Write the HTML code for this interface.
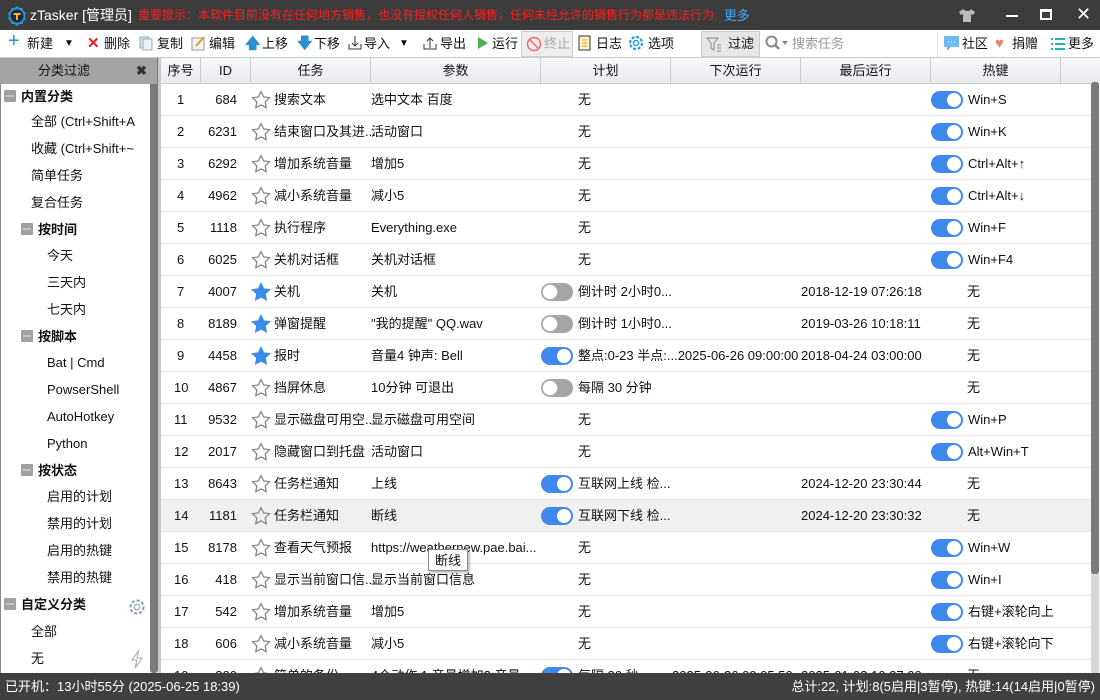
<!DOCTYPE html>
<html><head><meta charset="utf-8"><style>
*{margin:0;padding:0;box-sizing:border-box}
body{width:1100px;height:700px;overflow:hidden;position:relative;background:#fff;font-family:"Liberation Sans","Noto Sans CJK SC",sans-serif;font-size:13px;color:#111}
.a{position:absolute;white-space:nowrap}
#title{left:0;top:0;width:1100px;height:30px;background:#3c3c3c}
#tb{left:0;top:30px;width:1100px;height:28px;background:#fff;border-bottom:1px solid #ccc}
.tbi{position:absolute;top:36px;font-size:13px;line-height:16px}
#sbh{left:0;top:58px;width:158px;height:26px;background:#a4a4a4;border-right:1px solid #777}
#side{left:0;top:84px;width:150px;height:589px;background:#fff;border-left:1px solid #888}
#ssb{left:150px;top:84px;width:8px;height:589px;background:#7a7a7a;border-radius:0 0 3px 3px}
#sdiv{left:158px;top:58px;width:3px;height:615px;background:#c8c8c8}
#th{left:161px;top:58px;width:939px;height:26px;background:linear-gradient(#f7f8fa,#e8eaee);border-bottom:1px solid #c9ced6}
.hc{position:absolute;top:58px;height:26px;line-height:26px;text-align:center;border-right:1px solid #c9ced6;font-size:13px}
.row{position:absolute;left:161px;width:930px;height:32px;border-bottom:1px solid #e6e6e6}
.c{position:absolute;top:0;line-height:31px;white-space:nowrap}
.tg{position:absolute;top:7px;width:32px;height:18px;border-radius:9px;background:#3f88ee}
.tg:after{content:"";position:absolute;right:2px;top:2px;width:14px;height:14px;border-radius:50%;background:#fff}
.tg.off{background:#a5a5a5}
.tg.off:after{left:1px;right:auto;top:1px;width:16px;height:16px;border:1px solid #bbb;box-sizing:border-box}
.st{position:absolute;top:6px;left:90px}
.sd{position:absolute;font-size:13px;line-height:16px}
.box{display:inline-block;width:12px;height:12px;background:#a0a0a0;vertical-align:-1px;margin-right:5px;position:relative;border-radius:1px}
.box:after{content:"";position:absolute;left:2px;right:2px;top:5px;height:2px;background:#c4c4c4}
#status{left:0;top:673px;width:1100px;height:27px;background:#404040;color:#fff;font-size:13px;line-height:27px}
</style></head><body>
<div class="a" id="title"></div>
<svg class="a" style="left:6px;top:5px" width="22" height="22" viewBox="0 0 22 22"><path d="M11 1l2.5 2h3l1 3 2.5 2-1 3 1 3-2.5 2-1 3h-3L11 21l-2.5-2h-3l-1-3L2 14l1-3-1-3 2.5-2 1-3h3z" fill="#2a8fd6"/><circle cx="11" cy="11" r="6.5" fill="#1f2a36"/><path d="M7.5 8h7v2h-2.5v5h-2v-5H7.5z" fill="#f4b63a"/></svg>
<div class="a" style="left:30px;top:6px;color:#fff;font-size:14px;line-height:18px">zTasker [管理员]</div>
<div class="a" style="left:138px;top:7px;color:#ff1e1e;font-size:12px;line-height:17px">重要提示：本软件目前没有在任何地方销售，也没有授权任何人销售，任何未经允许的销售行为都是违法行为</div>
<div class="a" style="left:724px;top:7px;color:#3ea8ff;font-size:13px;line-height:17px">更多</div>
<svg class="a" style="left:958px;top:8px" width="18" height="15" viewBox="0 0 18 15"><path d="M5 1L1 4l2 3 2-1v8h8V6l2 1 2-3-4-3c-1 1.5-2 2-3 2S6 2.5 5 1z" fill="#bbb"/></svg>
<div class="a" style="left:1006px;top:15px;width:12px;height:2px;background:#fff"></div>
<div class="a" style="left:1040px;top:9px;width:12px;height:11px;border:2px solid #fff;border-top-width:3px"></div>
<div class="a" style="left:1076px;top:3px;color:#fff;font-size:18px;line-height:22px">✕</div>

<div class="a" id="tb"></div>
<div class="tbi" style="left:8px;color:#2a8fd6;font-size:20px;top:33px">+</div><div class="tbi" style="left:27px">新建</div><div class="tbi" style="left:64px;font-size:10px">▼</div>
<div class="tbi" style="left:87px;color:#e02020;font-size:15px;font-weight:bold">✕</div><div class="tbi" style="left:104px">删除</div>
<svg class="a" style="left:139px;top:36px" width="14" height="15"><rect x="1" y="1" width="9" height="11" fill="#dde5ee" stroke="#9ab"/><rect x="4" y="3" width="9" height="11" fill="#eef2f6" stroke="#9ab"/></svg><div class="tbi" style="left:157px">复制</div>
<svg class="a" style="left:191px;top:35px" width="16" height="16"><rect x="1" y="3" width="12" height="12" fill="#f4f4f4" stroke="#999"/><path d="M5 11L13 2" stroke="#d9a020" stroke-width="2"/></svg><div class="tbi" style="left:209px">编辑</div>
<div class="tbi" style="left:245px;color:#2a8fd6;font-size:15px;font-weight:bold">🡅</div><div class="tbi" style="left:262px">上移</div>
<div class="tbi" style="left:297px;color:#2a8fd6;font-size:15px;font-weight:bold">🡇</div><div class="tbi" style="left:314px">下移</div>
<svg class="a" style="left:348px;top:35px" width="14" height="16"><path d="M7 1v10M4 8l3 3 3-3M1 9v5h12V9" fill="none" stroke="#333"/></svg><div class="tbi" style="left:364px">导入</div><div class="tbi" style="left:399px;font-size:10px">▼</div>
<svg class="a" style="left:423px;top:35px" width="14" height="16"><path d="M7 13V3M4 6l3-3 3 3M1 9v5h12V9" fill="none" stroke="#333"/></svg><div class="tbi" style="left:440px">导出</div>
<svg class="a" style="left:477px;top:36px" width="12" height="14"><path d="M1 1l10 6-10 6z" fill="#4caf50"/></svg><div class="tbi" style="left:492px">运行</div>
<div class="a" style="left:521px;top:31px;width:52px;height:26px;background:#eee;border:1px solid #ccc"></div>
<svg class="a" style="left:526px;top:36px" width="16" height="16"><circle cx="8" cy="8" r="6.5" fill="none" stroke="#e66" stroke-width="1.5"/><path d="M3.5 3.5l9 9" stroke="#e66" stroke-width="1.5"/></svg><div class="tbi" style="left:544px;color:#aaa">终止</div>
<svg class="a" style="left:578px;top:35px" width="13" height="16"><rect x="1" y="1" width="11" height="14" fill="#fff6d0" stroke="#333"/><path d="M4 5h5M4 8h5M4 11h5" stroke="#e0a000"/></svg><div class="tbi" style="left:596px">日志</div>
<svg class="a" style="left:628px;top:35px" width="16" height="16"><circle cx="8" cy="8" r="6" fill="none" stroke="#2a9be0" stroke-width="2.2" stroke-dasharray="3 1.7"/><circle cx="8" cy="8" r="2.5" fill="none" stroke="#2a9be0" stroke-width="1.5"/></svg><div class="tbi" style="left:648px">选项</div>
<div class="a" style="left:701px;top:31px;width:59px;height:26px;background:#e6e6e6;border:1px solid #ccc"></div>
<svg class="a" style="left:706px;top:36px" width="16" height="16"><path d="M1 2h11l-4 5v7l-3-2V7z" fill="none" stroke="#888"/><path d="M11 9h4M11 12h4M11 15h4" stroke="#888"/></svg><div class="tbi" style="left:728px">过滤</div>
<svg class="a" style="left:765px;top:35px" width="24" height="16"><circle cx="6.5" cy="6.5" r="5" fill="none" stroke="#888" stroke-width="2"/><path d="M10 10l4 4" stroke="#888" stroke-width="2.5"/><path d="M17 6h6l-3 4z" fill="#888"/></svg><div class="tbi" style="left:792px;color:#999">搜索任务</div>
<div class="a" style="left:937px;top:31px;width:1px;height:26px;background:#ddd"></div>
<svg class="a" style="left:943px;top:35px" width="17" height="17"><path d="M1 1h15v11H8l-4 4v-4H1z" fill="#6fb9ee"/><path d="M5 7h1M8 7h1M11 7h1" stroke="#fff"/></svg><div class="tbi" style="left:962px">社区</div>
<div class="tbi" style="left:995px;color:#f08070;font-size:15px">♥</div><div class="tbi" style="left:1012px">捐赠</div>
<svg class="a" style="left:1050px;top:37px" width="15" height="14"><path d="M1 2h2M5 2h10M1 7h2M5 7h10M1 12h2M5 12h10" stroke="#1fb5b5" stroke-width="2"/></svg><div class="tbi" style="left:1068px">更多</div>

<div class="a" id="sbh"></div>
<div class="a" style="left:0;top:58px;width:128px;text-align:center;line-height:26px">分类过滤</div>
<div class="a" style="left:136px;top:58px;line-height:26px;font-weight:bold;color:#333">✖</div>
<div class="a" id="side"></div>
<div class="a" id="ssb"></div>
<div class="a" id="sdiv"></div>
<div class="sd" style="left:4px;top:89px;font-weight:bold"><span class="box"></span>内置分类</div>
<div class="sd" style="left:31px;top:114px">全部 (Ctrl+Shift+A</div>
<div class="sd" style="left:31px;top:141px">收藏 (Ctrl+Shift+~</div>
<div class="sd" style="left:31px;top:168px">简单任务</div>
<div class="sd" style="left:31px;top:195px">复合任务</div>
<div class="sd" style="left:21px;top:222px;font-weight:bold"><span class="box"></span>按时间</div>
<div class="sd" style="left:47px;top:248px">今天</div>
<div class="sd" style="left:47px;top:275px">三天内</div>
<div class="sd" style="left:47px;top:302px">七天内</div>
<div class="sd" style="left:21px;top:329px;font-weight:bold"><span class="box"></span>按脚本</div>
<div class="sd" style="left:47px;top:355px">Bat | Cmd</div>
<div class="sd" style="left:47px;top:382px">PowserShell</div>
<div class="sd" style="left:47px;top:409px">AutoHotkey</div>
<div class="sd" style="left:47px;top:436px">Python</div>
<div class="sd" style="left:21px;top:463px;font-weight:bold"><span class="box"></span>按状态</div>
<div class="sd" style="left:47px;top:489px">启用的计划</div>
<div class="sd" style="left:47px;top:516px">禁用的计划</div>
<div class="sd" style="left:47px;top:543px">启用的热键</div>
<div class="sd" style="left:47px;top:570px">禁用的热键</div>
<div class="sd" style="left:4px;top:597px;font-weight:bold"><span class="box"></span>自定义分类</div>
<svg class="a" style="left:128px;top:598px" width="18" height="18"><circle cx="9" cy="9" r="6.5" fill="none" stroke="#8898b0" stroke-width="2" stroke-dasharray="3 2"/><circle cx="9" cy="9" r="2.8" fill="none" stroke="#8898b0"/></svg>
<div class="sd" style="left:31px;top:624px">全部</div>
<div class="sd" style="left:31px;top:651px">无</div>
<svg class="a" style="left:130px;top:649px" width="14" height="20"><path d="M9 1L2 11h5l-2 8 7-10H7z" fill="none" stroke="#aaa"/></svg>

<div class="a" id="th"></div>
<div class="hc" style="left:161px;width:40px">序号</div>
<div class="hc" style="left:201px;width:50px">ID</div>
<div class="hc" style="left:251px;width:120px">任务</div>
<div class="hc" style="left:371px;width:170px">参数</div>
<div class="hc" style="left:541px;width:130px">计划</div>
<div class="hc" style="left:671px;width:130px">下次运行</div>
<div class="hc" style="left:801px;width:130px">最后运行</div>
<div class="hc" style="left:931px;width:130px">热键</div>

<svg width="0" height="0" style="position:absolute"><defs><symbol id="s" viewBox="0 0 20 20"><path d="M10 1.5l2.6 5.4 5.9.8-4.3 4.1 1 5.9L10 14.9l-5.2 2.8 1-5.9L1.5 7.7l5.9-.8z" fill="none" stroke="#888" stroke-width="1.3"/></symbol><symbol id="f" viewBox="0 0 20 20"><path d="M10 1.5l2.6 5.4 5.9.8-4.3 4.1 1 5.9L10 14.9l-5.2 2.8 1-5.9L1.5 7.7l5.9-.8z" fill="#3a8ee6" stroke="#3a8ee6" stroke-width="1.3"/></symbol></defs></svg>

<div class="row" style="top:84px"><span class="c" style="left:16px">1</span><span class="c" style="right:854px">684</span><svg class="st" width="20" height="20"><use href="#s"/></svg><span class="c" style="left:113px">搜索文本</span><span class="c" style="left:210px">选中文本 百度</span><span class="c" style="left:417px">无</span><span class="tg" style="left:770px"></span><span class="c" style="left:807px">Win+S</span></div>
<div class="row" style="top:116px"><span class="c" style="left:16px">2</span><span class="c" style="right:854px">6231</span><svg class="st" width="20" height="20"><use href="#s"/></svg><span class="c" style="left:113px">结束窗口及其进...</span><span class="c" style="left:210px">活动窗口</span><span class="c" style="left:417px">无</span><span class="tg" style="left:770px"></span><span class="c" style="left:807px">Win+K</span></div>
<div class="row" style="top:148px"><span class="c" style="left:16px">3</span><span class="c" style="right:854px">6292</span><svg class="st" width="20" height="20"><use href="#s"/></svg><span class="c" style="left:113px">增加系统音量</span><span class="c" style="left:210px">增加5</span><span class="c" style="left:417px">无</span><span class="tg" style="left:770px"></span><span class="c" style="left:807px">Ctrl+Alt+↑</span></div>
<div class="row" style="top:180px"><span class="c" style="left:16px">4</span><span class="c" style="right:854px">4962</span><svg class="st" width="20" height="20"><use href="#s"/></svg><span class="c" style="left:113px">减小系统音量</span><span class="c" style="left:210px">减小5</span><span class="c" style="left:417px">无</span><span class="tg" style="left:770px"></span><span class="c" style="left:807px">Ctrl+Alt+↓</span></div>
<div class="row" style="top:212px"><span class="c" style="left:16px">5</span><span class="c" style="right:854px">1118</span><svg class="st" width="20" height="20"><use href="#s"/></svg><span class="c" style="left:113px">执行程序</span><span class="c" style="left:210px">Everything.exe</span><span class="c" style="left:417px">无</span><span class="tg" style="left:770px"></span><span class="c" style="left:807px">Win+F</span></div>
<div class="row" style="top:244px"><span class="c" style="left:16px">6</span><span class="c" style="right:854px">6025</span><svg class="st" width="20" height="20"><use href="#s"/></svg><span class="c" style="left:113px">关机对话框</span><span class="c" style="left:210px">关机对话框</span><span class="c" style="left:417px">无</span><span class="tg" style="left:770px"></span><span class="c" style="left:807px">Win+F4</span></div>
<div class="row" style="top:276px"><span class="c" style="left:16px">7</span><span class="c" style="right:854px">4007</span><svg class="st" width="20" height="20"><use href="#f"/></svg><span class="c" style="left:113px">关机</span><span class="c" style="left:210px">关机</span><span class="tg off" style="left:380px"></span><span class="c" style="left:417px">倒计时 2小时0...</span><span class="c" style="left:640px">2018-12-19 07:26:18</span><span class="c" style="left:806px">无</span></div>
<div class="row" style="top:308px"><span class="c" style="left:16px">8</span><span class="c" style="right:854px">8189</span><svg class="st" width="20" height="20"><use href="#f"/></svg><span class="c" style="left:113px">弹窗提醒</span><span class="c" style="left:210px">"我的提醒" QQ.wav</span><span class="tg off" style="left:380px"></span><span class="c" style="left:417px">倒计时 1小时0...</span><span class="c" style="left:640px">2019-03-26 10:18:11</span><span class="c" style="left:806px">无</span></div>
<div class="row" style="top:340px"><span class="c" style="left:16px">9</span><span class="c" style="right:854px">4458</span><svg class="st" width="20" height="20"><use href="#f"/></svg><span class="c" style="left:113px">报时</span><span class="c" style="left:210px">音量4 钟声: Bell</span><span class="tg" style="left:380px"></span><span class="c" style="left:417px">整点:0-23 半点:...2025-06-26 09:00:00</span><span class="c" style="left:640px">2018-04-24 03:00:00</span><span class="c" style="left:806px">无</span></div>
<div class="row" style="top:372px"><span class="c" style="left:13px">10</span><span class="c" style="right:854px">4867</span><svg class="st" width="20" height="20"><use href="#s"/></svg><span class="c" style="left:113px">挡屏休息</span><span class="c" style="left:210px">10分钟 可退出</span><span class="tg off" style="left:380px"></span><span class="c" style="left:417px">每隔 30 分钟</span><span class="c" style="left:806px">无</span></div>
<div class="row" style="top:404px"><span class="c" style="left:13px">11</span><span class="c" style="right:854px">9532</span><svg class="st" width="20" height="20"><use href="#s"/></svg><span class="c" style="left:113px">显示磁盘可用空...</span><span class="c" style="left:210px">显示磁盘可用空间</span><span class="c" style="left:417px">无</span><span class="tg" style="left:770px"></span><span class="c" style="left:807px">Win+P</span></div>
<div class="row" style="top:436px"><span class="c" style="left:13px">12</span><span class="c" style="right:854px">2017</span><svg class="st" width="20" height="20"><use href="#s"/></svg><span class="c" style="left:113px">隐藏窗口到托盘</span><span class="c" style="left:210px">活动窗口</span><span class="c" style="left:417px">无</span><span class="tg" style="left:770px"></span><span class="c" style="left:807px">Alt+Win+T</span></div>
<div class="row" style="top:468px"><span class="c" style="left:13px">13</span><span class="c" style="right:854px">8643</span><svg class="st" width="20" height="20"><use href="#s"/></svg><span class="c" style="left:113px">任务栏通知</span><span class="c" style="left:210px">上线</span><span class="tg" style="left:380px"></span><span class="c" style="left:417px">互联网上线 检...</span><span class="c" style="left:640px">2024-12-20 23:30:44</span><span class="c" style="left:806px">无</span></div>
<div class="row" style="top:500px;background:#f0f0f0"><span class="c" style="left:13px">14</span><span class="c" style="right:854px">1181</span><svg class="st" width="20" height="20"><use href="#s"/></svg><span class="c" style="left:113px">任务栏通知</span><span class="c" style="left:210px">断线</span><span class="tg" style="left:380px"></span><span class="c" style="left:417px">互联网下线 检...</span><span class="c" style="left:640px">2024-12-20 23:30:32</span><span class="c" style="left:806px">无</span></div>
<div class="row" style="top:532px"><span class="c" style="left:13px">15</span><span class="c" style="right:854px">8178</span><svg class="st" width="20" height="20"><use href="#s"/></svg><span class="c" style="left:113px">查看天气预报</span><span class="c" style="left:210px">https://weathernew.pae.bai...</span><span class="c" style="left:417px">无</span><span class="tg" style="left:770px"></span><span class="c" style="left:807px">Win+W</span></div>
<div class="row" style="top:564px"><span class="c" style="left:13px">16</span><span class="c" style="right:854px">418</span><svg class="st" width="20" height="20"><use href="#s"/></svg><span class="c" style="left:113px">显示当前窗口信...</span><span class="c" style="left:210px">显示当前窗口信息</span><span class="c" style="left:417px">无</span><span class="tg" style="left:770px"></span><span class="c" style="left:807px">Win+I</span></div>
<div class="row" style="top:596px"><span class="c" style="left:13px">17</span><span class="c" style="right:854px">542</span><svg class="st" width="20" height="20"><use href="#s"/></svg><span class="c" style="left:113px">增加系统音量</span><span class="c" style="left:210px">增加5</span><span class="c" style="left:417px">无</span><span class="tg" style="left:770px"></span><span class="c" style="left:807px">右键+滚轮向上</span></div>
<div class="row" style="top:628px"><span class="c" style="left:13px">18</span><span class="c" style="right:854px">606</span><svg class="st" width="20" height="20"><use href="#s"/></svg><span class="c" style="left:113px">减小系统音量</span><span class="c" style="left:210px">减小5</span><span class="c" style="left:417px">无</span><span class="tg" style="left:770px"></span><span class="c" style="left:807px">右键+滚轮向下</span></div>
<div class="row" style="top:660px"><span class="c" style="left:13px">19</span><span class="c" style="right:854px">800</span><svg class="st" width="20" height="20"><use href="#s"/></svg><span class="c" style="left:113px">简单的备份</span><span class="c" style="left:210px">4个动作 1.音量增加2 音量</span><span class="tg" style="left:380px"></span><span class="c" style="left:417px">每隔 30 秒</span><span class="c" style="left:511px">2025-06-26 09:05:50</span><span class="c" style="left:640px">2025-01-03 10:27:00</span><span class="c" style="left:806px">无</span></div>

<div class="a" style="left:428px;top:549px;height:22px;padding:0 6px;line-height:21px;background:#fff;border:1px solid #888;box-shadow:2px 2px 2px rgba(0,0,0,.25);font-size:13px">断线</div>

<div class="a" style="left:1091px;top:84px;width:8px;height:590px;background:#d8d8d8;border-radius:3px"></div>
<div class="a" style="left:1091px;top:82px;width:8px;height:492px;background:#7a7a7a;border-radius:3px"></div>

<div class="a" id="status"><span style="position:absolute;left:5px">已开机：13小时55分 (2025-06-25 18:39)</span><span style="position:absolute;right:5px">总计:22, 计划:8(5启用|3暂停), 热键:14(14启用|0暂停)</span></div>
</body></html>
